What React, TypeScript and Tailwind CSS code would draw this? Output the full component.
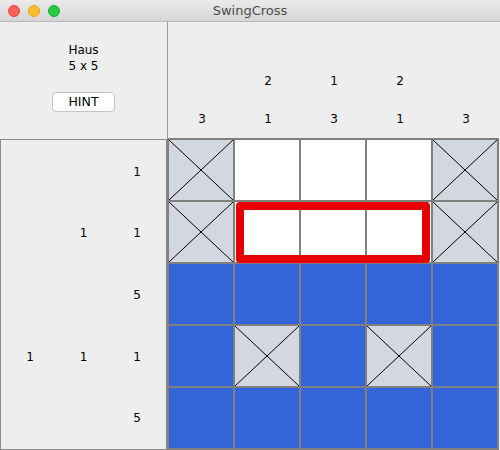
import React from "react";

type Cell = "x" | "w" | "b";

const grid: Cell[][] = [
  ["x", "w", "w", "w", "x"],
  ["x", "w", "w", "w", "x"],
  ["b", "b", "b", "b", "b"],
  ["b", "x", "b", "x", "b"],
  ["b", "b", "b", "b", "b"],
];

const colClues: (string | null)[][] = [
  [null, "3"],
  ["2", "1"],
  ["1", "3"],
  ["2", "1"],
  [null, "3"],
];

const rowClues: (string | null)[][] = [
  [null, null, "1"],
  [null, "1", "1"],
  [null, null, "5"],
  ["1", "1", "1"],
  [null, null, "5"],
];

function XCell() {
  return (
    <div className="bg-[#d3d8e0]">
      <svg width="64" height="60" viewBox="0 0 64 60" className="block">
        <line x1="0" y1="0" x2="64" y2="60" stroke="#000" strokeWidth="1" />
        <line x1="64" y1="0" x2="0" y2="60" stroke="#000" strokeWidth="1" />
      </svg>
    </div>
  );
}

export default function App() {
  return (
    <div
      className="w-[500px] h-[450px] overflow-hidden bg-[#eeeeee] text-[12px] text-black"
      style={{ fontFamily: '"DejaVu Sans", "Liberation Sans", sans-serif' }}
    >
      {/* title bar */}
      <div className="relative h-[22px] bg-gradient-to-b from-[#ebebeb] to-[#d5d5d5] border-b border-[#b9b9b9] flex items-center">
        <div className="flex items-center gap-[8px] pl-[8px]">
          <div className="w-[12px] h-[12px] rounded-full bg-[#fe5f57] border border-[#e2463f]" />
          <div className="w-[12px] h-[12px] rounded-full bg-[#febc2e] border border-[#e1a116]" />
          <div className="w-[12px] h-[12px] rounded-full bg-[#28c840] border border-[#14ae2c]" />
        </div>
        <div className="absolute inset-0 flex items-center justify-center text-[13px] text-[#4c4c4c]">
          SwingCross
        </div>
      </div>

      {/* top row */}
      <div className="flex h-[116px]">
        <div className="w-[167px] flex flex-col items-center">
          <div className="mt-[20px] leading-[16px] text-center">Haus</div>
          <div className="leading-[16px] text-center">5 x 5</div>
          <div className="mt-[18px] w-[63px] h-[20px] bg-white border border-[#c4c4c4] rounded-[4px] flex items-center justify-center text-[12.5px]">
            HINT
          </div>
        </div>
        <div className="w-[333px] border-l border-[#9a9a9a] flex pl-[1px]">
          {colClues.map((c, i) => (
            <div key={i} className="w-[66px] flex flex-col items-center">
              <div className="mt-[51px] h-[16px] leading-[16px]">{c[0] ?? ""}</div>
              <div className="mt-[22px] h-[16px] leading-[16px]">{c[1]}</div>
            </div>
          ))}
        </div>
      </div>

      {/* bottom */}
      <div className="flex">
        <div className="w-[167px] h-[311px] mt-[1px] border border-[#8c8c8c] flex flex-col pt-[1px]">
          {rowClues.map((r, i) => (
            <div key={i} className="h-[62px] flex items-center">
              <div className="w-[56px] text-center pl-[2px]">{r[0] ?? ""}</div>
              <div className="w-[53px] text-center">{r[1] ?? ""}</div>
              <div className="w-[54px] text-center">{r[2] ?? ""}</div>
            </div>
          ))}
        </div>
        <div className="relative w-[332px] h-[312px] bg-[#808080] p-[2px] grid grid-cols-[repeat(5,64px)] grid-rows-[repeat(5,60px)] gap-[2px]">
          {grid.map((row, r) =>
            row.map((c, ci) =>
              c === "x" ? (
                <XCell key={`${r}-${ci}`} />
              ) : (
                <div
                  key={`${r}-${ci}`}
                  className={c === "b" ? "bg-[#3465d8]" : "bg-white"}
                />
              )
            )
          )}
          <div className="absolute left-[69px] top-[64px] w-[194px] h-[61px] border-[8px] border-[#e60000] rounded-[4px]" />
        </div>
      </div>
    </div>
  );
}
